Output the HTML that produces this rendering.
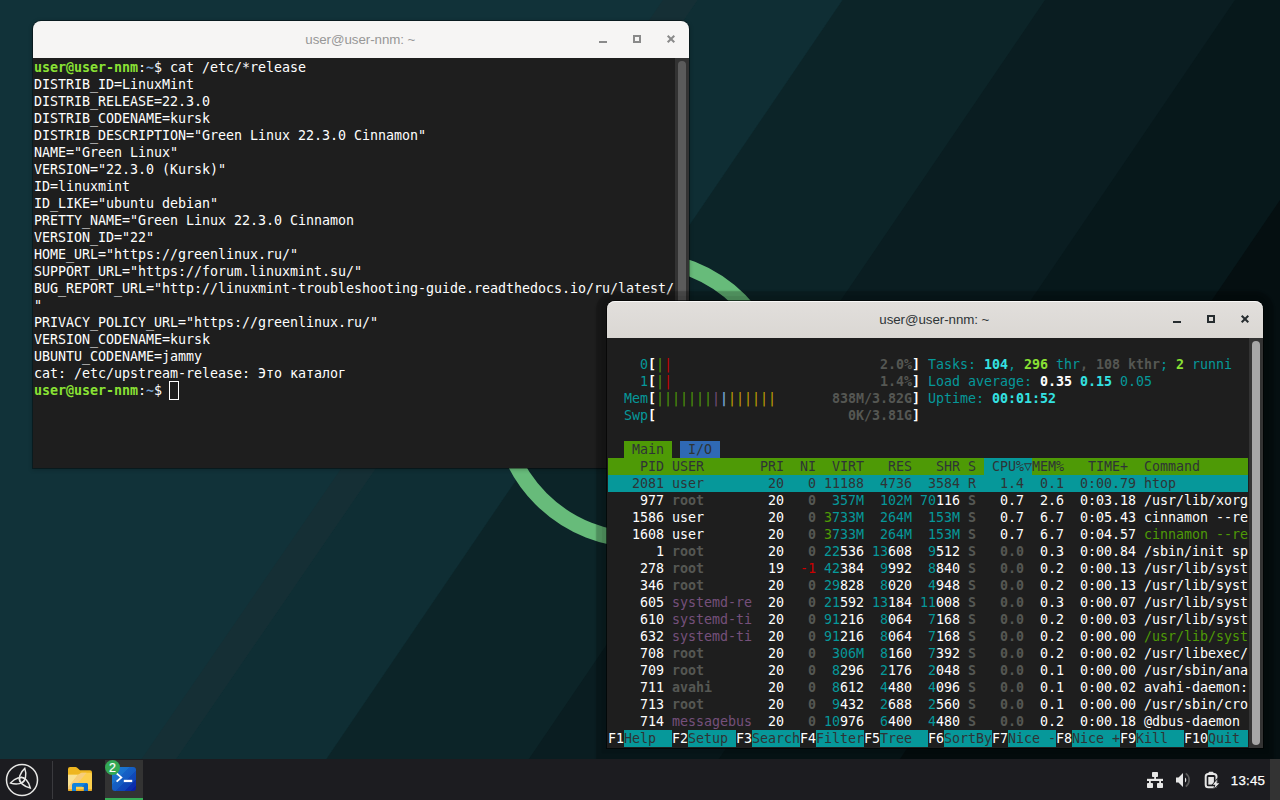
<!DOCTYPE html>
<html lang="ru">
<head>
<meta charset="utf-8">
<title>Green Linux desktop</title>
<style>
*{box-sizing:border-box}
html,body{margin:0;padding:0;width:1280px;height:800px;overflow:hidden;background:#113239}
body{position:relative;font-family:"Liberation Sans",sans-serif}
#wall{position:absolute;left:0;top:0;width:1280px;height:800px}
.win{position:absolute;width:656px;border-radius:8px 8px 0 0;box-shadow:0 0 0 1px rgba(0,0,0,.38),0 1px 4px 1px rgba(0,0,0,.2)}
#w2{box-shadow:0 0 0 1px rgba(0,0,0,.6),0 0 1px 5px rgba(0,0,0,.07),0 1px 1.5px 11px rgba(0,0,0,.24)}
#w2 .sb i{background:#a6a6a6}
.tb{position:absolute;left:0;top:0;width:100%;height:37px;border-radius:8px 8px 0 0;text-align:center;font-size:13.333px;line-height:37px;letter-spacing:-0.06px;padding-right:1.4px}
.tb svg{position:absolute;top:0;right:0}
.term{position:absolute;left:0;top:37px;width:100%;background:#1e1e1e;overflow:hidden;font-family:"DejaVu Sans Mono","Liberation Mono",monospace;font-size:13.333px;letter-spacing:-0.0243px;color:#fff}
.r{position:absolute;left:0;height:17px;line-height:17px;white-space:pre}
.r span{position:absolute;top:0;height:17px;white-space:pre}
.b{font-weight:bold}
.cur{position:absolute;width:10px;height:19px;margin:-1px 0 0 -1px;border:1px solid #fff}
.sb{position:absolute;right:0;top:0;width:14px;height:100%;background:#333}
.sb i{position:absolute;left:3px;top:3px;bottom:3px;width:8px;border-radius:4px;background:#5b5b5b}
#panel{position:absolute;left:0;top:759px;width:1280px;height:41px;background:#1c1c20}
#panel svg{position:absolute;left:0;top:0}
#clock{position:absolute;left:1228px;top:0;width:40px;height:41px;line-height:43px;font-size:13.3px;letter-spacing:.2px;color:#fff;text-align:center;-webkit-text-stroke:.25px #fff}
#badge{position:absolute;left:105px;top:1px;width:15px;height:15px;line-height:16px;text-align:center;color:#fff;font-size:12.4px;-webkit-text-stroke:.2px #fff}
</style>
</head>
<body>
<svg id="wall" width="1280" height="800" viewBox="0 0 1280 800">
<rect width="1280" height="800" fill="#113239"/>
<polygon points="697.6,0 842.5,0 298.5,800 148,800" fill="#0f2e34"/>
<polygon points="663,0 697.6,0 148,800 113.4,800" fill="#152f35"/>
<polygon points="842.5,0 1280,0 1280,800 298.5,800" fill="#0c2428"/>
<polygon points="1045,0 1280,0 1280,800 501,800" fill="#0a1d21"/>
<polygon points="1235,0 1280,0 1280,800 691,800" fill="#07181b"/>
<polygon points="1280,200 1280,800 872,800" fill="#050f11"/>
<circle cx="640.4" cy="399.6" r="140.4" fill="none" stroke="#67bb7a" stroke-width="15.8"/>
</svg>

<div class="win" id="w1" style="left:33px;top:21px;height:447px">
 <div class="tb" style="background:#f6f5f4;color:#979797">user@user-nnm: ~
  <svg width="110" height="37" viewBox="0 0 110 37" fill="none" stroke="#8a8a8a" stroke-width="2">
   <path d="M20 21h8"/><rect x="55" y="15" width="6" height="6"/><path d="M88.7 14.7l6.6 6.6M95.3 14.7l-6.6 6.6"/>
  </svg>
 </div>
 <div class="term" style="height:410px"><div class="r" style="top:1px"><span class="b" style="left:1px;color:#8ae234;">user@user-nnm</span><span style="left:105px;">:</span><span class="b" style="left:113px;color:#729fcf;">~</span><span style="left:121px;">$ </span><span style="left:137px;">cat /etc/*release</span></div>
<div class="r" style="top:18px"><span style="left:1px;">DISTRIB_ID=LinuxMint</span></div>
<div class="r" style="top:35px"><span style="left:1px;">DISTRIB_RELEASE=22.3.0</span></div>
<div class="r" style="top:52px"><span style="left:1px;">DISTRIB_CODENAME=kursk</span></div>
<div class="r" style="top:69px"><span style="left:1px;">DISTRIB_DESCRIPTION="Green Linux 22.3.0 Cinnamon"</span></div>
<div class="r" style="top:86px"><span style="left:1px;">NAME="Green Linux"</span></div>
<div class="r" style="top:103px"><span style="left:1px;">VERSION="22.3.0 (Kursk)"</span></div>
<div class="r" style="top:120px"><span style="left:1px;">ID=linuxmint</span></div>
<div class="r" style="top:137px"><span style="left:1px;">ID_LIKE="ubuntu debian"</span></div>
<div class="r" style="top:154px"><span style="left:1px;">PRETTY_NAME="Green Linux 22.3.0 Cinnamon</span></div>
<div class="r" style="top:171px"><span style="left:1px;">VERSION_ID="22"</span></div>
<div class="r" style="top:188px"><span style="left:1px;">HOME_URL="https:</span><span style="left:129px;">//greenlinux.ru/"</span></div>
<div class="r" style="top:205px"><span style="left:1px;">SUPPORT_URL="https:</span><span style="left:153px;">//forum.linuxmint.su/"</span></div>
<div class="r" style="top:222px"><span style="left:1px;">BUG_REPORT_URL="http:</span><span style="left:169px;">//linuxmint-troubleshooting-guide.readthedocs.io/ru/latest/</span></div>
<div class="r" style="top:239px"><span style="left:1px;">"</span></div>
<div class="r" style="top:256px"><span style="left:1px;">PRIVACY_POLICY_URL="https:</span><span style="left:209px;">//greenlinux.ru/"</span></div>
<div class="r" style="top:273px"><span style="left:1px;">VERSION_CODENAME=kursk</span></div>
<div class="r" style="top:290px"><span style="left:1px;">UBUNTU_CODENAME=jammy</span></div>
<div class="r" style="top:307px"><span style="left:1px;">cat: /etc/upstream-release: Это каталог</span></div>
<div class="r" style="top:324px"><span class="b" style="left:1px;color:#8ae234;">user@user-nnm</span><span style="left:105px;">:</span><span class="b" style="left:113px;color:#729fcf;">~</span><span style="left:121px;">$ </span></div>
<div class="cur" style="left:137px;top:324px"></div><div class="sb"><i></i></div></div>
</div>

<div class="win" id="w2" style="left:607px;top:301px;height:447px">
 <div class="tb" style="background:linear-gradient(#e2dfdc,#dad7d3);color:#2e3436;box-shadow:inset 0 1px 0 rgba(255,255,255,.75)">user@user-nnm: ~
  <svg width="110" height="37" viewBox="0 0 110 37" fill="none" stroke="#262c2f" stroke-width="2">
   <path d="M20 21h8"/><rect x="55" y="15" width="6" height="6"/><path d="M88.7 14.7l6.6 6.6M95.3 14.7l-6.6 6.6"/>
  </svg>
 </div>
 <div class="term" style="height:410px"><div class="r" style="top:1px"></div>
<div class="r" style="top:18px"><span style="left:1px;color:#06989a;">    0</span><span class="b" style="left:41px;color:#ffffff;">[</span><span style="left:49px;color:#4e9a06;">|</span><span style="left:57px;color:#cc0000;">|                          </span><span class="b" style="left:273px;color:#555753;">2.0%</span><span class="b" style="left:305px;color:#ffffff;">] </span><span style="left:321px;color:#06989a;">Tasks: </span><span class="b" style="left:377px;color:#34e2e2;">104</span><span style="left:401px;color:#06989a;">, </span><span class="b" style="left:417px;color:#8ae234;">296</span><span style="left:441px;color:#06989a;"> thr</span><span class="b" style="left:473px;color:#555753;">, 108 kthr</span><span style="left:553px;color:#06989a;">; </span><span class="b" style="left:569px;color:#8ae234;">2</span><span style="left:577px;color:#06989a;"> runni</span></div>
<div class="r" style="top:35px"><span style="left:1px;color:#06989a;">    1</span><span class="b" style="left:41px;color:#ffffff;">[</span><span style="left:49px;color:#4e9a06;">|</span><span style="left:57px;color:#cc0000;">|                          </span><span class="b" style="left:273px;color:#555753;">1.4%</span><span class="b" style="left:305px;color:#ffffff;">] </span><span style="left:321px;color:#06989a;">Load average: </span><span class="b" style="left:433px;color:#ffffff;">0.35 </span><span class="b" style="left:473px;color:#34e2e2;">0.15 </span><span style="left:513px;color:#06989a;">0.05</span></div>
<div class="r" style="top:52px"><span style="left:1px;color:#06989a;">  Mem</span><span class="b" style="left:41px;color:#ffffff;">[</span><span style="left:49px;color:#4e9a06;">|||||||</span><span style="left:105px;color:#75507b;">|</span><span class="b" style="left:113px;color:#729fcf;">|</span><span style="left:121px;color:#c4a000;">||||||       </span><span class="b" style="left:225px;color:#555753;">838M/3.82G</span><span class="b" style="left:305px;color:#ffffff;">] </span><span style="left:321px;color:#06989a;">Uptime: </span><span class="b" style="left:385px;color:#34e2e2;">00:01:52</span></div>
<div class="r" style="top:69px"><span style="left:1px;color:#06989a;">  Swp</span><span class="b" style="left:41px;color:#ffffff;">[                        </span><span class="b" style="left:241px;color:#555753;">0K/3.81G</span><span class="b" style="left:305px;color:#ffffff;">]</span></div>
<div class="r" style="top:86px"></div>
<div class="r" style="top:103px"><span style="left:1px;">  </span><span style="left:17px;color:#2e3436;background:#4e9a06;width:48px;"> Main </span><span style="left:65px;"> </span><span style="left:73px;color:#2e3436;background:#2f69b4;width:40px;"> I/O </span></div>
<div class="r" style="top:120px"><span style="left:1px;color:#2e3436;background:#4e9a06;width:376px;">    PID USER       PRI  NI  VIRT   RES   SHR S </span><span style="left:377px;color:#2e3436;background:#06989a;width:48px;"> CPU%▽</span><span style="left:425px;color:#2e3436;background:#4e9a06;width:216px;">MEM%   TIME+  Command      </span></div>
<div class="r" style="top:137px"><span style="left:1px;color:#2e3436;background:#06989a;width:640px;">   2081 user        20   0 11188  4736  3584 R   1.4  0.1  0:00.79 htop         </span></div>
<div class="r" style="top:154px"><span style="left:1px;">    977 </span><span class="b" style="left:65px;color:#555753;">root       </span><span style="left:153px;"> 20 </span><span class="b" style="left:185px;color:#555753;">  0  </span><span style="left:225px;color:#06989a;">357M  </span><span style="left:273px;color:#06989a;">102M </span><span style="left:313px;color:#06989a;">70</span><span style="left:329px;">116 </span><span class="b" style="left:361px;color:#555753;">S </span><span style="left:377px;">  0.7 </span><span style="left:425px;"> 2.6 </span><span style="left:465px;"> 0:03.18 </span><span style="left:537px;">/usr/lib/xorg</span></div>
<div class="r" style="top:171px"><span style="left:1px;">   1586 </span><span style="left:65px;">user       </span><span style="left:153px;"> 20 </span><span class="b" style="left:185px;color:#555753;">  0 </span><span style="left:217px;color:#4e9a06;">3</span><span style="left:225px;color:#06989a;">733M  </span><span style="left:273px;color:#06989a;">264M  </span><span style="left:321px;color:#06989a;">153M </span><span class="b" style="left:361px;color:#555753;">S </span><span style="left:377px;">  0.7 </span><span style="left:425px;"> 6.7 </span><span style="left:465px;"> 0:05.43 </span><span style="left:537px;">cinnamon --re</span></div>
<div class="r" style="top:188px"><span style="left:1px;">   1608 </span><span style="left:65px;">user       </span><span style="left:153px;"> 20 </span><span class="b" style="left:185px;color:#555753;">  0 </span><span style="left:217px;color:#4e9a06;">3</span><span style="left:225px;color:#06989a;">733M  </span><span style="left:273px;color:#06989a;">264M  </span><span style="left:321px;color:#06989a;">153M </span><span class="b" style="left:361px;color:#555753;">S </span><span style="left:377px;">  0.7 </span><span style="left:425px;"> 6.7 </span><span style="left:465px;"> 0:04.57 </span><span style="left:537px;color:#4e9a06;">cinnamon --re</span></div>
<div class="r" style="top:205px"><span style="left:1px;">      1 </span><span class="b" style="left:65px;color:#555753;">root       </span><span style="left:153px;"> 20 </span><span class="b" style="left:185px;color:#555753;">  0 </span><span style="left:217px;color:#06989a;">22</span><span style="left:233px;">536 </span><span style="left:265px;color:#06989a;">13</span><span style="left:281px;">608  </span><span style="left:321px;color:#06989a;">9</span><span style="left:329px;">512 </span><span class="b" style="left:361px;color:#555753;">S </span><span class="b" style="left:377px;color:#555753;">  0.0 </span><span style="left:425px;"> 0.3 </span><span style="left:465px;"> 0:00.84 </span><span style="left:537px;">/sbin/init sp</span></div>
<div class="r" style="top:222px"><span style="left:1px;">    278 </span><span class="b" style="left:65px;color:#555753;">root       </span><span style="left:153px;"> 19 </span><span style="left:185px;color:#cc0000;"> -1 </span><span style="left:217px;color:#06989a;">42</span><span style="left:233px;">384  </span><span style="left:273px;color:#06989a;">9</span><span style="left:281px;">992  </span><span style="left:321px;color:#06989a;">8</span><span style="left:329px;">840 </span><span class="b" style="left:361px;color:#555753;">S </span><span class="b" style="left:377px;color:#555753;">  0.0 </span><span style="left:425px;"> 0.2 </span><span style="left:465px;"> 0:00.13 </span><span style="left:537px;">/usr/lib/syst</span></div>
<div class="r" style="top:239px"><span style="left:1px;">    346 </span><span class="b" style="left:65px;color:#555753;">root       </span><span style="left:153px;"> 20 </span><span class="b" style="left:185px;color:#555753;">  0 </span><span style="left:217px;color:#06989a;">29</span><span style="left:233px;">828  </span><span style="left:273px;color:#06989a;">8</span><span style="left:281px;">020  </span><span style="left:321px;color:#06989a;">4</span><span style="left:329px;">948 </span><span class="b" style="left:361px;color:#555753;">S </span><span class="b" style="left:377px;color:#555753;">  0.0 </span><span style="left:425px;"> 0.2 </span><span style="left:465px;"> 0:00.13 </span><span style="left:537px;">/usr/lib/syst</span></div>
<div class="r" style="top:256px"><span style="left:1px;">    605 </span><span style="left:65px;color:#75507b;">systemd-re </span><span style="left:153px;"> 20 </span><span class="b" style="left:185px;color:#555753;">  0 </span><span style="left:217px;color:#06989a;">21</span><span style="left:233px;">592 </span><span style="left:265px;color:#06989a;">13</span><span style="left:281px;">184 </span><span style="left:313px;color:#06989a;">11</span><span style="left:329px;">008 </span><span class="b" style="left:361px;color:#555753;">S </span><span class="b" style="left:377px;color:#555753;">  0.0 </span><span style="left:425px;"> 0.3 </span><span style="left:465px;"> 0:00.07 </span><span style="left:537px;">/usr/lib/syst</span></div>
<div class="r" style="top:273px"><span style="left:1px;">    610 </span><span style="left:65px;color:#75507b;">systemd-ti </span><span style="left:153px;"> 20 </span><span class="b" style="left:185px;color:#555753;">  0 </span><span style="left:217px;color:#06989a;">91</span><span style="left:233px;">216  </span><span style="left:273px;color:#06989a;">8</span><span style="left:281px;">064  </span><span style="left:321px;color:#06989a;">7</span><span style="left:329px;">168 </span><span class="b" style="left:361px;color:#555753;">S </span><span class="b" style="left:377px;color:#555753;">  0.0 </span><span style="left:425px;"> 0.2 </span><span style="left:465px;"> 0:00.03 </span><span style="left:537px;">/usr/lib/syst</span></div>
<div class="r" style="top:290px"><span style="left:1px;">    632 </span><span style="left:65px;color:#75507b;">systemd-ti </span><span style="left:153px;"> 20 </span><span class="b" style="left:185px;color:#555753;">  0 </span><span style="left:217px;color:#06989a;">91</span><span style="left:233px;">216  </span><span style="left:273px;color:#06989a;">8</span><span style="left:281px;">064  </span><span style="left:321px;color:#06989a;">7</span><span style="left:329px;">168 </span><span class="b" style="left:361px;color:#555753;">S </span><span class="b" style="left:377px;color:#555753;">  0.0 </span><span style="left:425px;"> 0.2 </span><span style="left:465px;"> 0:00.00 </span><span style="left:537px;color:#4e9a06;">/usr/lib/syst</span></div>
<div class="r" style="top:307px"><span style="left:1px;">    708 </span><span class="b" style="left:65px;color:#555753;">root       </span><span style="left:153px;"> 20 </span><span class="b" style="left:185px;color:#555753;">  0  </span><span style="left:225px;color:#06989a;">306M  </span><span style="left:273px;color:#06989a;">8</span><span style="left:281px;">160  </span><span style="left:321px;color:#06989a;">7</span><span style="left:329px;">392 </span><span class="b" style="left:361px;color:#555753;">S </span><span class="b" style="left:377px;color:#555753;">  0.0 </span><span style="left:425px;"> 0.2 </span><span style="left:465px;"> 0:00.02 </span><span style="left:537px;">/usr/libexec/</span></div>
<div class="r" style="top:324px"><span style="left:1px;">    709 </span><span class="b" style="left:65px;color:#555753;">root       </span><span style="left:153px;"> 20 </span><span class="b" style="left:185px;color:#555753;">  0  </span><span style="left:225px;color:#06989a;">8</span><span style="left:233px;">296  </span><span style="left:273px;color:#06989a;">2</span><span style="left:281px;">176  </span><span style="left:321px;color:#06989a;">2</span><span style="left:329px;">048 </span><span class="b" style="left:361px;color:#555753;">S </span><span class="b" style="left:377px;color:#555753;">  0.0 </span><span style="left:425px;"> 0.1 </span><span style="left:465px;"> 0:00.00 </span><span style="left:537px;">/usr/sbin/ana</span></div>
<div class="r" style="top:341px"><span style="left:1px;">    711 </span><span class="b" style="left:65px;color:#555753;">avahi      </span><span style="left:153px;"> 20 </span><span class="b" style="left:185px;color:#555753;">  0  </span><span style="left:225px;color:#06989a;">8</span><span style="left:233px;">612  </span><span style="left:273px;color:#06989a;">4</span><span style="left:281px;">480  </span><span style="left:321px;color:#06989a;">4</span><span style="left:329px;">096 </span><span class="b" style="left:361px;color:#555753;">S </span><span class="b" style="left:377px;color:#555753;">  0.0 </span><span style="left:425px;"> 0.1 </span><span style="left:465px;"> 0:00.02 </span><span style="left:537px;">avahi-daemon:</span></div>
<div class="r" style="top:358px"><span style="left:1px;">    713 </span><span class="b" style="left:65px;color:#555753;">root       </span><span style="left:153px;"> 20 </span><span class="b" style="left:185px;color:#555753;">  0  </span><span style="left:225px;color:#06989a;">9</span><span style="left:233px;">432  </span><span style="left:273px;color:#06989a;">2</span><span style="left:281px;">688  </span><span style="left:321px;color:#06989a;">2</span><span style="left:329px;">560 </span><span class="b" style="left:361px;color:#555753;">S </span><span class="b" style="left:377px;color:#555753;">  0.0 </span><span style="left:425px;"> 0.1 </span><span style="left:465px;"> 0:00.00 </span><span style="left:537px;">/usr/sbin/cro</span></div>
<div class="r" style="top:375px"><span style="left:1px;">    714 </span><span style="left:65px;color:#75507b;">messagebus </span><span style="left:153px;"> 20 </span><span class="b" style="left:185px;color:#555753;">  0 </span><span style="left:217px;color:#06989a;">10</span><span style="left:233px;">976  </span><span style="left:273px;color:#06989a;">6</span><span style="left:281px;">400  </span><span style="left:321px;color:#06989a;">4</span><span style="left:329px;">480 </span><span class="b" style="left:361px;color:#555753;">S </span><span class="b" style="left:377px;color:#555753;">  0.0 </span><span style="left:425px;"> 0.2 </span><span style="left:465px;"> 0:00.18 </span><span style="left:537px;">@dbus-daemon</span></div>
<div class="r" style="top:392px"><span style="left:1px;color:#ffffff;">F1</span><span style="left:17px;color:#2e3436;background:#06989a;width:48px;">Help  </span><span style="left:65px;color:#ffffff;">F2</span><span style="left:81px;color:#2e3436;background:#06989a;width:48px;">Setup </span><span style="left:129px;color:#ffffff;">F3</span><span style="left:145px;color:#2e3436;background:#06989a;width:48px;">Search</span><span style="left:193px;color:#ffffff;">F4</span><span style="left:209px;color:#2e3436;background:#06989a;width:48px;">Filter</span><span style="left:257px;color:#ffffff;">F5</span><span style="left:273px;color:#2e3436;background:#06989a;width:48px;">Tree  </span><span style="left:321px;color:#ffffff;">F6</span><span style="left:337px;color:#2e3436;background:#06989a;width:48px;">SortBy</span><span style="left:385px;color:#ffffff;">F7</span><span style="left:401px;color:#2e3436;background:#06989a;width:48px;">Nice -</span><span style="left:449px;color:#ffffff;">F8</span><span style="left:465px;color:#2e3436;background:#06989a;width:48px;">Nice +</span><span style="left:513px;color:#ffffff;">F9</span><span style="left:529px;color:#2e3436;background:#06989a;width:48px;">Kill  </span><span style="left:577px;color:#ffffff;">F10</span><span style="left:601px;color:#2e3436;background:#06989a;width:40px;">Quit </span></div>
<div class="sb"><i></i></div></div>
</div>

<div id="panel">
 <svg width="1280" height="41" viewBox="0 0 1280 41">
  <rect x="1270" y="0" width="10" height="41" fill="#333"/>
  <rect x="52" y="2" width="1" height="38" fill="#3a3a3e"/>
  <!-- menu -->
  <g fill="none" stroke="#e8e8e6" stroke-width="1.3">
   <circle cx="22" cy="21" r="15.5" stroke-width="1.5"/>
   <g transform="translate(21.9,20.8) rotate(-2) scale(.975)" stroke-width="1.5">
    <path d="M3.4,-11.6 C-1.3,-7.8 -4.77,-0.49 -1.01,2.95 C4.03,2.17 5.2,-5.83 3.4,-11.6Z"/>
    <path d="M3.4,-11.6 C-1.3,-7.8 -4.77,-0.49 -1.01,2.95 C4.03,2.17 5.2,-5.83 3.4,-11.6Z" transform="rotate(120)"/>
    <path d="M3.4,-11.6 C-1.3,-7.8 -4.77,-0.49 -1.01,2.95 C4.03,2.17 5.2,-5.83 3.4,-11.6Z" transform="rotate(240)"/>
   </g>
  </g>
  <!-- folder -->
  <path d="M68 10a2 2 0 0 1 2-2h5.6a2 2 0 0 1 1.3.5l3.1 2.7h10a2 2 0 0 1 2 2v6H68z" fill="#eeb620"/>
  <path d="M68 15.7h10l3.5-1.9h9a1.5 1.5 0 0 1 1.5 1.5v15.2a1.5 1.5 0 0 1-1.5 1.5h-21a1.5 1.5 0 0 1-1.5-1.5z" fill="#fccf4d"/>
  <path d="M68 15.7h10l-10 12.8z" fill="#f9e192"/>
  <path d="M78 15.7l3.5-1.9h5.1l-14.1 16.6h-4.5v-1.9z" fill="#f6cd7c"/>
  <path d="M68 30.3h24v.2a1.5 1.5 0 0 1-1.5 1.5h-21a1.5 1.5 0 0 1-1.5-1.5z" fill="#eaa922"/>
  <path d="M72 32v-6a2 2 0 0 1 2-2h12a2 2 0 0 1 2 2v6h-4.1v-4.2h-7.9v4.2z" fill="#0f82dc"/>
  <path d="M86.5 24.05a2 2 0 0 1 1.5 1.95v6h-4.1v-4.2h-2z" fill="#0b6bc8"/>
  <!-- terminal button -->
  <rect x="105" y="1" width="38" height="40" fill="#333"/>
  <rect x="105" y="39" width="38" height="2" fill="#35ad55"/>
  <defs><linearGradient id="tg" x1="0" y1="0" x2="1" y2="1"><stop offset="0" stop-color="#1d7bd3"/><stop offset=".36" stop-color="#1a70cc"/><stop offset=".36" stop-color="#1562c6"/><stop offset=".57" stop-color="#1459c1"/><stop offset=".57" stop-color="#104bb9"/><stop offset=".75" stop-color="#0f43b5"/><stop offset=".75" stop-color="#0b31ac"/><stop offset=".88" stop-color="#0b2caa"/><stop offset=".88" stop-color="#0a20a5"/><stop offset="1" stop-color="#0a1ea4"/></linearGradient></defs>
  <rect x="112" y="8" width="24" height="24" rx="3" fill="url(#tg)"/>
  <path d="M116.6 14.4l4.7 4-4.7 4.2" fill="none" stroke="#fff" stroke-width="1.9"/>
  <rect x="123.8" y="20.8" width="8.4" height="2.3" fill="#fff"/>
  <circle cx="112.5" cy="8.5" r="7.5" fill="#33a854"/>
  <!-- network -->
  <g fill="#e6e6e6">
   <rect x="1152" y="13" width="6" height="5" rx=".8"/>
   <rect x="1154.2" y="17" width="1.8" height="3"/>
   <rect x="1147" y="19.8" width="16" height="2.2"/>
   <rect x="1149" y="21" width="1.8" height="4"/><rect x="1159.2" y="21" width="1.8" height="4"/>
   <rect x="1147" y="24" width="6" height="5" rx=".8"/>
   <rect x="1157" y="24" width="6" height="5" rx=".8"/>
  </g>
  <!-- volume -->
  <path d="M1176 18.5h2.5l4.5-4.5v14l-4.5-4.5h-2.5z" fill="#e6e6e6"/>
  <path d="M1185 18.5a3 3 0 0 1 0 5z" fill="#e6e6e6"/>
  <path d="M1185.8 14.4a8.2 8.2 0 0 1 0 13.2" fill="none" stroke="#5a5a5a" stroke-width="1.7"/>
  <!-- battery -->
  <rect x="1208.5" y="12.8" width="5" height="3" rx="1" fill="#e6e6e6"/>
  <rect x="1205.7" y="15" width="10.8" height="13.2" rx="2.5" fill="none" stroke="#e6e6e6" stroke-width="2"/>
  <rect x="1208.3" y="18" width="5.6" height="7.6" fill="#e6e6e6"/>
  <path d="M1216.9 20.8L1212.9 25.7h2.5l-1.2 3.9L1219.3 24.2h-2.7z" fill="#ececec" stroke="#1c1c20" stroke-width="1.6" paint-order="stroke"/>
 </svg>
 <div id="badge">2</div>
 <div id="clock">13:45</div>
</div>
</body>
</html>
